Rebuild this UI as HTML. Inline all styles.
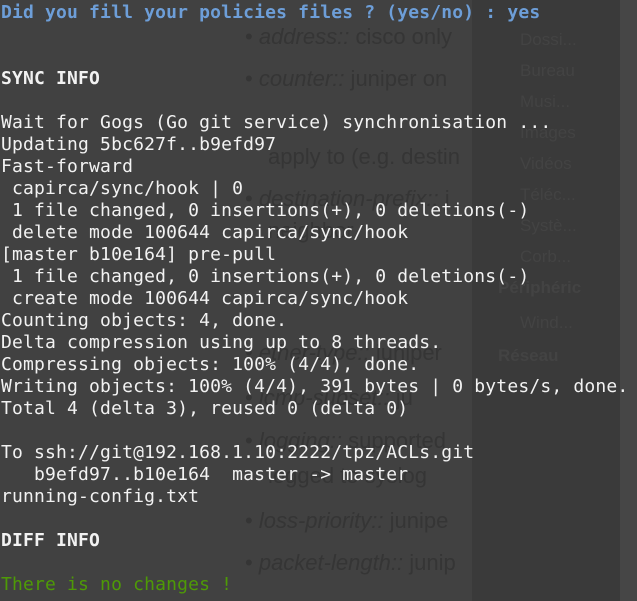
<!DOCTYPE html>
<html><head><meta charset="utf-8"><style>
html,body{margin:0;padding:0;width:637px;height:601px;overflow:hidden;background:#414141;}
.bg{position:absolute;}
.ghost{position:absolute;font-family:"Liberation Sans",sans-serif;font-size:22px;color:#353535;white-space:nowrap;}
.ghost i{font-style:italic;}
.side{position:absolute;font-family:"Liberation Sans",sans-serif;font-size:17px;color:#434343;white-space:nowrap;left:520px;}
pre{position:absolute;left:1px;top:2px;margin:0;font-family:"DejaVu Sans Mono",monospace;font-size:18px;letter-spacing:0.17px;line-height:22px;color:#f2f2f2;}
.b{font-weight:bold;}
.blue{color:#6d9ed8;font-weight:bold;}
.g{color:#4e9a06;}
</style></head><body>
<div class="bg" style="left:472px;top:0;width:148px;height:601px;background:#3a3a3a"></div>
<div class="bg" style="left:620px;top:0;width:17px;height:601px;background:#464646"></div>
<div class="ghost" style="left:245px;top:24px">• <i>address::</i> cisco only</div>
<div class="ghost" style="left:245px;top:66px">• <i>counter::</i> juniper on</div>
<div class="ghost" style="left:268px;top:144px">apply to (e.g. destin</div>
<div class="ghost" style="left:245px;top:186px">• <i>destination-prefix::</i> j</div>
<div class="ghost" style="left:268px;top:218px">neighbor</div>
<div class="ghost" style="left:245px;top:340px">• <i>ether-type::</i> juniper</div>
<div class="ghost" style="left:245px;top:385px">• <i>icmp-subset::</i> ju</div>
<div class="ghost" style="left:245px;top:428px">• <i>logging::</i> supported</div>
<div class="ghost" style="left:268px;top:463px">logged to syslog</div>
<div class="ghost" style="left:245px;top:508px">• <i>loss-priority::</i> junipe</div>
<div class="ghost" style="left:245px;top:550px">• <i>packet-length::</i> junip</div>
<div class="side" style="top:30px">Dossi...</div>
<div class="side" style="top:61px">Bureau</div>
<div class="side" style="top:92px">Musi...</div>
<div class="side" style="top:123px">Images</div>
<div class="side" style="top:154px">Vidéos</div>
<div class="side" style="top:185px">Téléc...</div>
<div class="side" style="top:216px">Systè...</div>
<div class="side" style="top:247px">Corb...</div>
<div class="side" style="top:278px;left:498px;font-weight:bold">Périphéric</div>
<div class="side" style="top:313px">Wind...</div>
<div class="side" style="top:346px;left:498px;font-weight:bold">Réseau</div>
<pre><span class="blue">Did you fill your policies files ? (yes/no) : yes</span>


<span class="b">SYNC INFO</span>

Wait for Gogs (Go git service) synchronisation ...
Updating 5bc627f..b9efd97
Fast-forward
 capirca/sync/hook | 0
 1 file changed, 0 insertions(+), 0 deletions(-)
 delete mode 100644 capirca/sync/hook
[master b10e164] pre-pull
 1 file changed, 0 insertions(+), 0 deletions(-)
 create mode 100644 capirca/sync/hook
Counting objects: 4, done.
Delta compression using up to 8 threads.
Compressing objects: 100% (4/4), done.
Writing objects: 100% (4/4), 391 bytes | 0 bytes/s, done.
Total 4 (delta 3), reused 0 (delta 0)

To ssh://git@192.168.1.10:2222/tpz/ACLs.git
   b9efd97..b10e164  master -&gt; master
running-config.txt

<span class="b">DIFF INFO</span>

<span class="g">There is no changes !</span></pre>
</body></html>
